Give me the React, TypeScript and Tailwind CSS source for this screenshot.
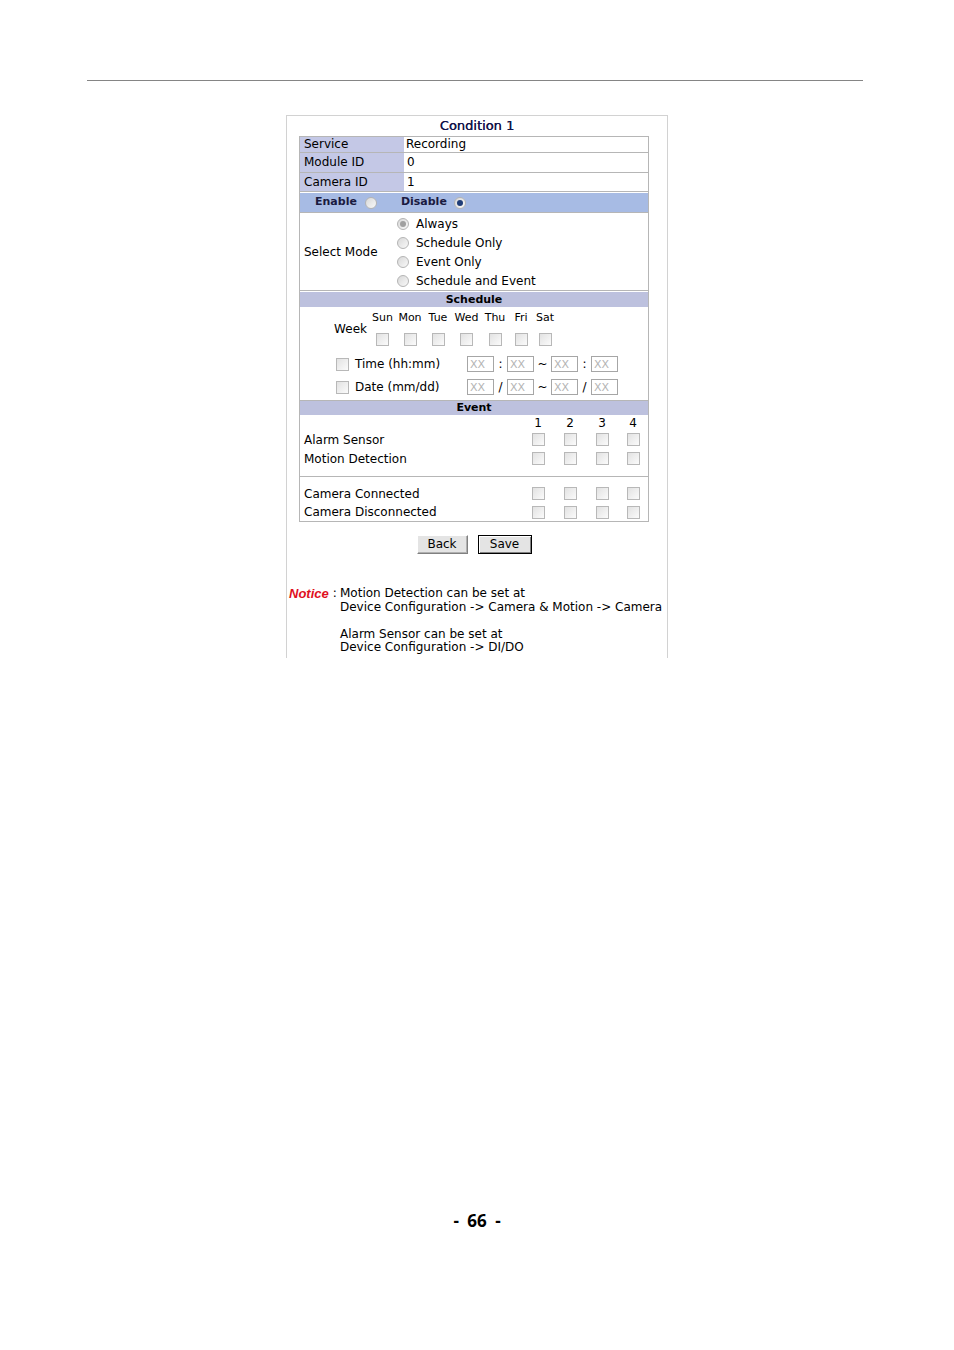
import React from 'react';

const font = "font-['DejaVu_Sans',sans-serif]";

function Radio({ checked, dim }: { checked?: boolean; dim?: boolean }) {
    return (
        <span className="inline-flex h-[12px] w-[12px] shrink-0 items-center justify-center rounded-full border border-[#b4b4b4] bg-linear-to-br from-[#d8d8d8] to-[#f9f9f9]">
            {checked && <span className={dim ? 'h-[6px] w-[6px] rounded-full bg-[#a0a0a0]' : 'h-[6px] w-[6px] rounded-full bg-[#1f3d78]'} />}
        </span>
    );
}

function Check() {
    return <span className="block h-[13px] w-[13px] shrink-0 border border-[#b8b8b8] bg-linear-to-br from-[#e2e2e2] to-[#fbfbfb]" />;
}

function XX() {
    return (
        <span className="flex h-[16px] w-[27px] shrink-0 items-center border border-[#a6a6a6] pl-[2px] text-[11px] leading-none text-[#b4b4b4]">
            XX
        </span>
    );
}

const days = [
    { d: 'Sun', w: 'w-[27px]' },
    { d: 'Mon', w: 'w-[28px]' },
    { d: 'Tue', w: 'w-[28px]' },
    { d: 'Wed', w: 'w-[29px]' },
    { d: 'Thu', w: 'w-[28px]' },
    { d: 'Fri', w: 'w-[24px]' },
    { d: 'Sat', w: 'w-[24px]' },
];

function RangeRow({ label, sep }: { label: string; sep: string }) {
    return (
        <div className="flex h-[16px] items-center pl-[36px]">
            <Check />
            <span className="w-[118px] shrink-0 pl-[6px] text-[12px]">{label}</span>
            <XX />
            <span className="w-[13px] text-center text-[12px]">{sep}</span>
            <XX />
            <span className="w-[17px] text-center text-[12px]">~</span>
            <XX />
            <span className="w-[13px] text-center text-[12px]">{sep}</span>
            <XX />
        </div>
    );
}

function EventRow({ label, h }: { label: string; h: string }) {
    return (
        <div className={`flex items-center ${h}`}>
            <span className="w-[222px] shrink-0 pl-[4px] text-[12px]">{label}</span>
            {[1, 2, 3, 4].map(n => (
                <span key={n} className={n === 4 ? 'flex w-[30px] justify-center' : 'flex w-[32px] justify-center'}>
                    <Check />
                </span>
            ))}
        </div>
    );
}

export default function App() {
    return (
        <div className={`relative h-[1350px] w-[954px] bg-white text-black ${font}`}>
            <div className="h-[80px]" />
            <div className="ml-[87px] h-px w-[776px] bg-[#858585]" />

            <div className="ml-[286px] mt-[34px] h-[543px] w-[382px] border border-b-0 border-[#d2d2d2]">
                <div className="h-[20px] text-center text-[13px] leading-[20px] text-[#12124a] [text-shadow:0.3px_0_0_#12124a]">Condition 1</div>

                {/* main table */}
                <div className="ml-[12px] w-[350px] border-x border-b border-[#b6b6b6]">
                    <div className="flex h-[16px] border-t border-[#b6b6b6] text-[12px] leading-[15px]">
                        <span className="w-[104px] bg-[#c4c8e6] pl-[4px]">Service</span>
                        <span className="pl-[2px]">Recording</span>
                    </div>
                    <div className="flex h-[20px] border-t border-[#b6b6b6] text-[12px] leading-[19px]">
                        <span className="w-[104px] bg-[#c4c8e6] pl-[4px]">Module ID</span>
                        <span className="pl-[3px]">0</span>
                    </div>
                    <div className="flex h-[19px] border-t border-[#b6b6b6] text-[12px] leading-[18px]">
                        <span className="w-[104px] bg-[#c4c8e6] pl-[4px]">Camera ID</span>
                        <span className="pl-[3px]">1</span>
                    </div>
                    <div className="h-[21px] border-t border-[#b6b6b6] pt-[1px]">
                        <div className="flex h-[19px] items-center bg-[#a7bbe4] pl-[15px] text-[11px] font-bold text-[#1a1a40]">
                            <span>Enable</span>
                            <span className="ml-[8px] flex"><Radio /></span>
                            <span className="ml-[24px]">Disable</span>
                            <span className="ml-[7px] flex"><Radio checked /></span>
                        </div>
                    </div>

                    {/* select mode */}
                    <div className="flex h-[78px] border-t border-[#b6b6b6]">
                        <div className="flex w-[97px] shrink-0 items-center pl-[4px] text-[12px]">Select Mode</div>
                        <div className="flex flex-col pt-[2px] text-[12px]">
                            {['Always', 'Schedule Only', 'Event Only', 'Schedule and Event'].map(m => (
                                <div key={m} className="flex h-[19px] items-center">
                                    <Radio checked={m === 'Always'} dim />
                                    <span className="ml-[7px]">{m}</span>
                                </div>
                            ))}
                        </div>
                    </div>

                    {/* schedule */}
                    <div className="border-t border-[#b6b6b6] pt-[1px]">
                        <div className="h-[15px] bg-[#bdc1de] text-center text-[11px] font-bold leading-[15px]">Schedule</div>
                        <div className="h-[93px]">
                            <div className="flex pt-[4px]">
                                <div className="flex w-[69px] shrink-0 items-center justify-end pr-[2px] text-[12px]">Week</div>
                                {days.map(({ d, w }) => (
                                    <div key={d} className={`flex flex-col items-center ${w}`}>
                                        <span className="block h-[14px] text-[11px] leading-[14px]">{d}</span>
                                        <span className="mt-[8px] flex"><Check /></span>
                                    </div>
                                ))}
                            </div>
                            <div className="mt-[10px]"><RangeRow label="Time (hh:mm)" sep=":" /></div>
                            <div className="mt-[7px]"><RangeRow label="Date (mm/dd)" sep="/" /></div>
                        </div>
                    </div>

                    {/* event */}
                    <div className="border-t border-[#b6b6b6]">
                        <div className="h-[14px] bg-[#bdc1de] text-center text-[11px] font-bold leading-[14px]">Event</div>
                        <div className="h-[61px] pt-[1px]">
                            <div className="flex h-[14px] items-center text-[12px]">
                                <span className="w-[222px] shrink-0" />
                                {[1, 2, 3, 4].map(n => (
                                    <span key={n} className={n === 4 ? 'w-[30px] text-center' : 'w-[32px] text-center'}>{n}</span>
                                ))}
                            </div>
                            <EventRow label="Alarm Sensor" h="h-[19px]" />
                            <EventRow label="Motion Detection" h="h-[19px]" />
                        </div>
                        <div className="h-[45px] border-t border-[#b6b6b6] pt-[7px]">
                            <EventRow label="Camera Connected" h="h-[19px]" />
                            <EventRow label="Camera Disconnected" h="h-[18px]" />
                        </div>
                    </div>
                </div>

                {/* buttons */}
                <div className="ml-[12px] mt-[13px] flex w-[350px] justify-center gap-[10px] text-[12px]">
                    <button className="h-[19px] w-[51px] border border-t-[#ffffff] border-l-[#ffffff] border-b-[#808080] border-r-[#808080] bg-[#e4e4e4] leading-[17px] shadow-[inset_-1px_-1px_0_#b0b0b0]">
                        Back
                    </button>
                    <button className="h-[19px] w-[54px] border border-black bg-[#e4e4e4] leading-[17px] shadow-[inset_1px_1px_0_#ffffff,inset_-1px_-1px_0_#808080]">
                        Save
                    </button>
                </div>

                {/* notice */}
                <div className="mt-[33px] flex text-[12px] leading-[13.5px]">
                    <div className="flex w-[53px] shrink-0 pl-[2px]">
                        <span className="font-['Liberation_Sans',sans-serif] text-[13px] font-bold italic text-[#e0101e]">Notice</span>
                        <span className="ml-[4px]">:</span>
                    </div>
                    <div className="whitespace-nowrap">
                        <div>Motion Detection can be set at</div>
                        <div>Device Configuration -&gt; Camera &amp; Motion -&gt; Camera</div>
                        <div className="h-[13.5px]" />
                        <div>Alarm Sensor can be set at</div>
                        <div>Device Configuration -&gt; DI/DO</div>
                    </div>
                </div>
            </div>

            <div className="mt-[551px] h-[24px] text-center font-['Open_Sans',sans-serif] text-[17px] font-bold leading-[24px] [word-spacing:4px]">
                - 66 -
            </div>
        </div>
    );
}
